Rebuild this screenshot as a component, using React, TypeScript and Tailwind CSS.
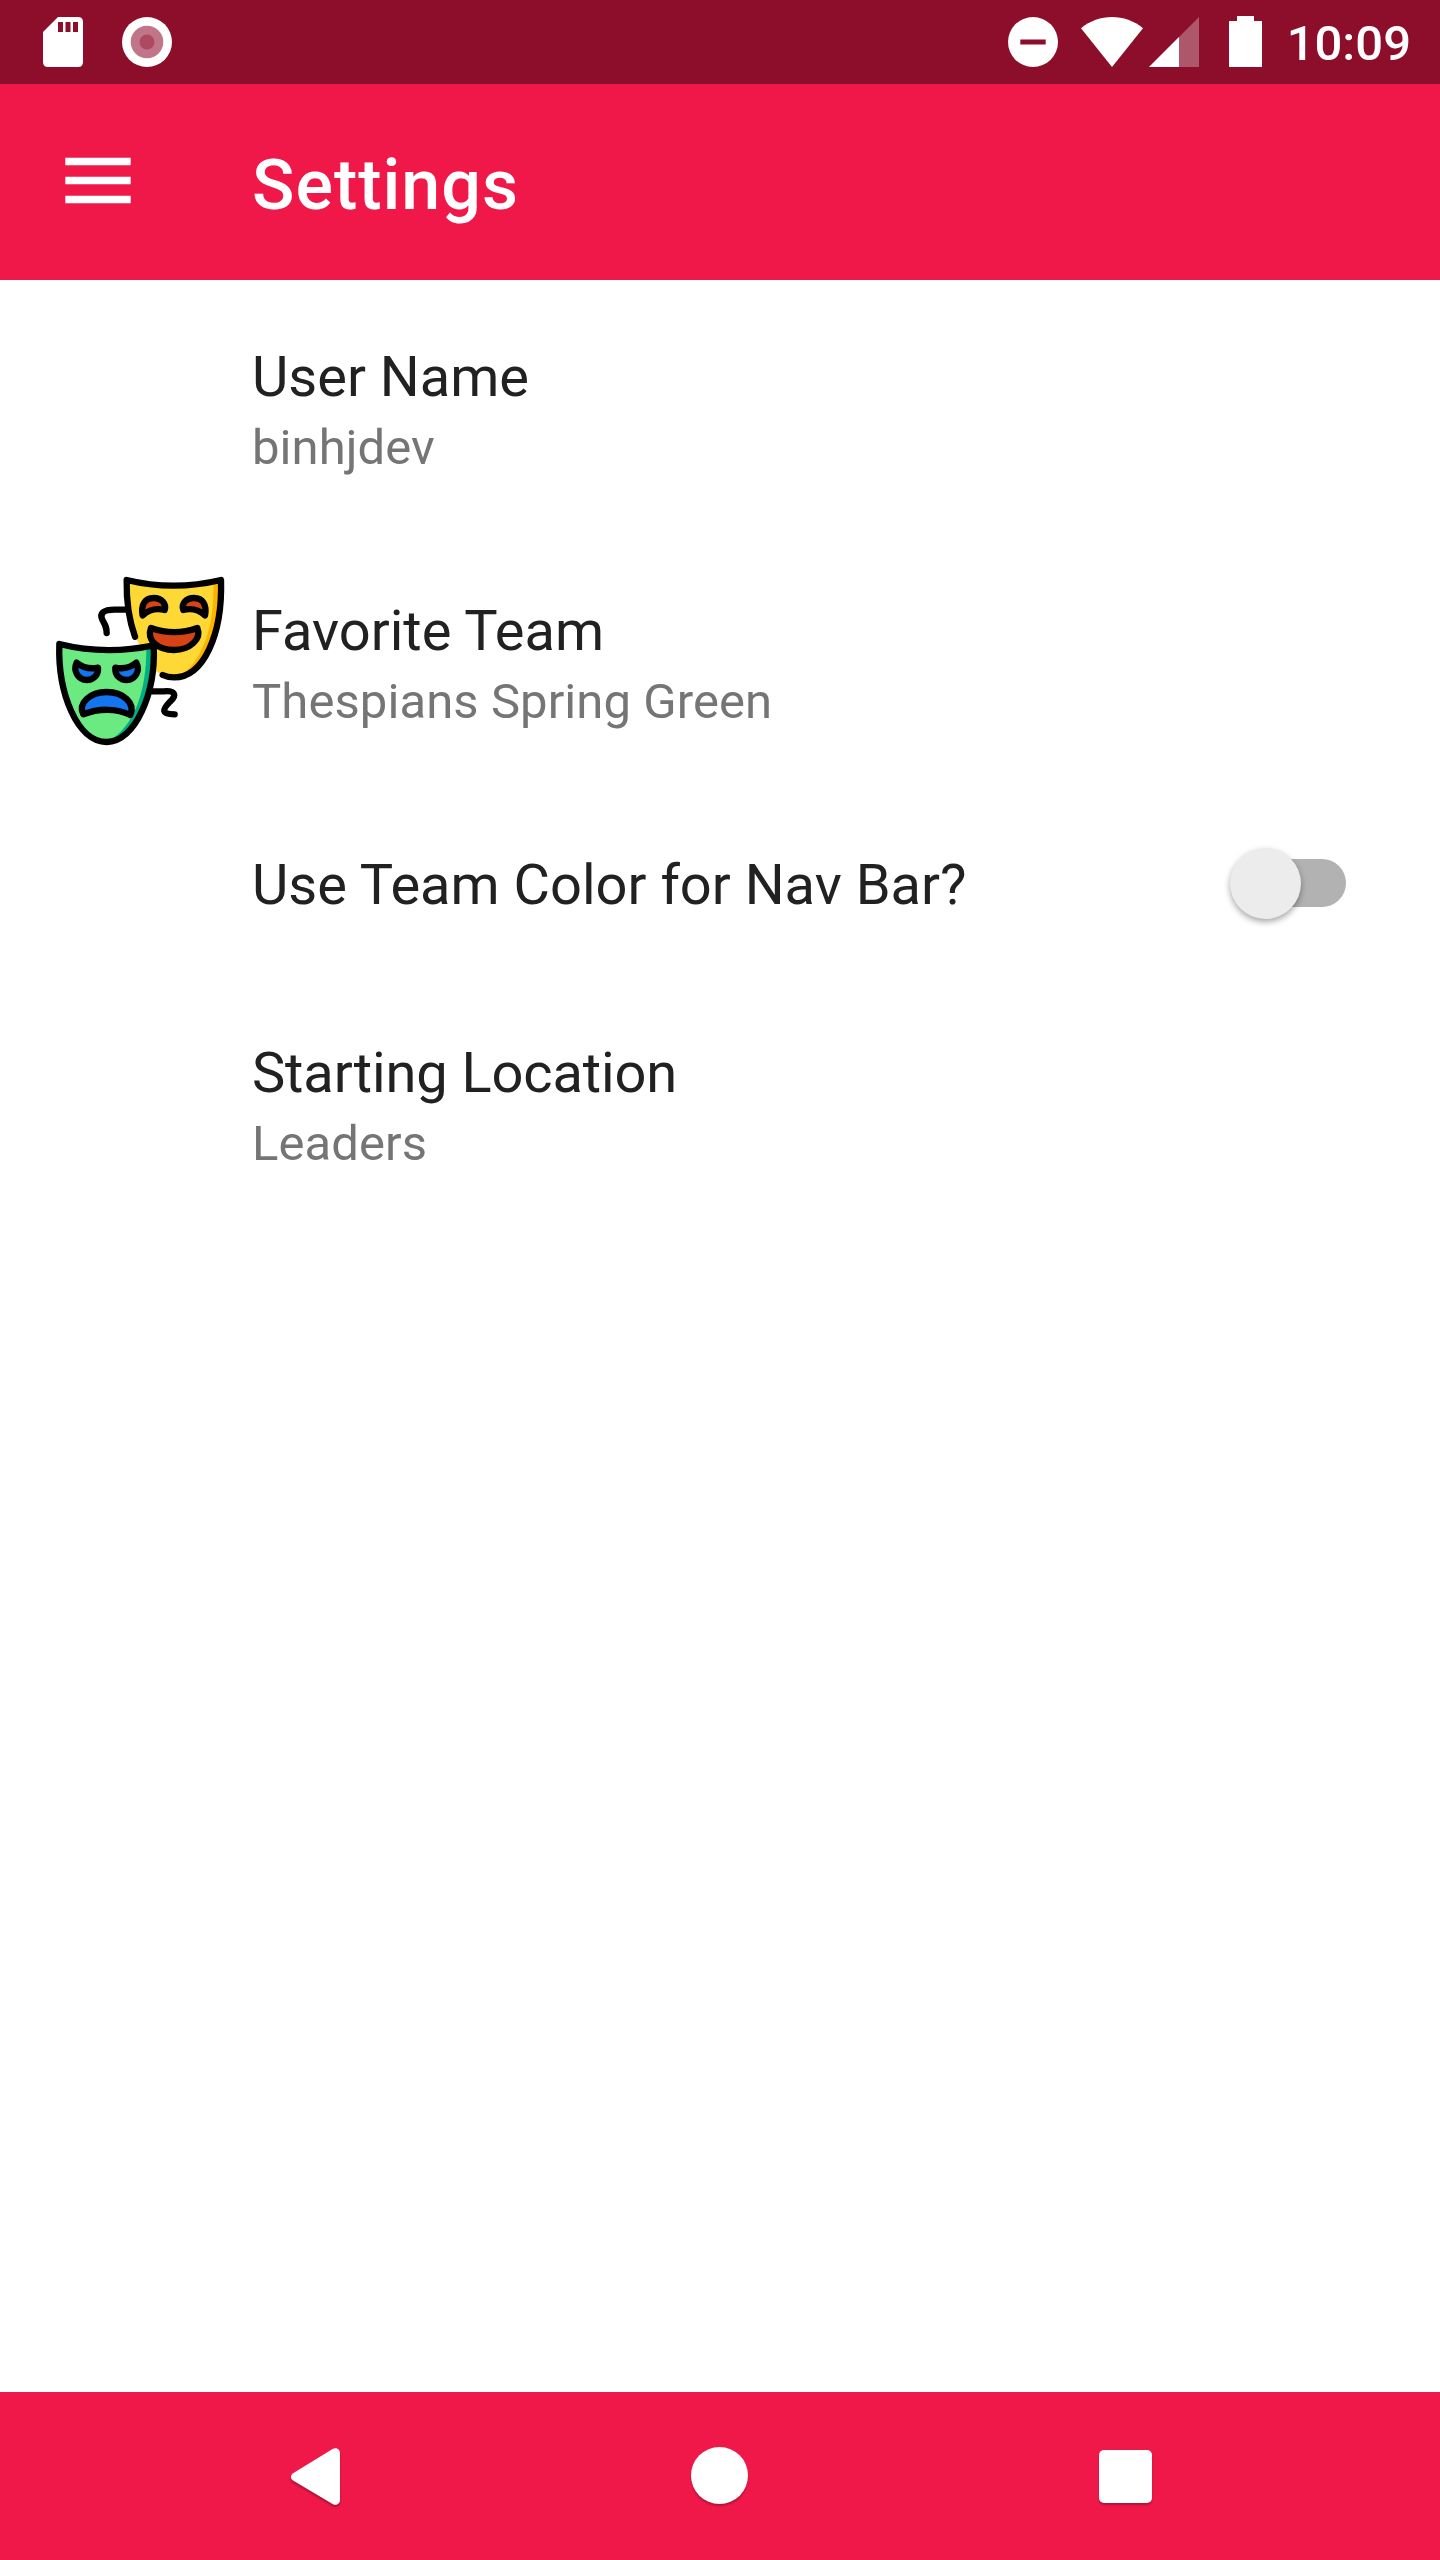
import type { ReactNode } from "react";

function Masks() {
  return (
    <svg viewBox="0 0 600 600" className="mb-[2px] h-[200px] w-[200px] shrink-0" fill="none" stroke="#000" strokeWidth="19" strokeLinecap="round" strokeLinejoin="round">
      <path d="M264 149H224C190 149 178 160 187 179C197 198 200 202 200 219" />
      <path d="M330 394H371C405 391 412 404 390 425C367 449 362 463 404 463" />
      <path d="M260 60Q400 92 543 60C547 210 500 353 402 352C385 352 372 347 350 335L285 232C265 180 260 120 260 60Z" fill="#fed835" stroke="none" />
      <path d="M520 66L543 60C547 210 500 353 410 350C480 320 525 210 520 66Z" fill="#ffb300" stroke="none" />
      <path d="M285 230C265 175 259 115 260 60C350 82 450 82 543 60C548 225 490 352 402 352C389 352 378 350 368 345" />
      <path d="M308 166C302 134 315 114 341 114C366 114 380 132 374 150C350 144 326 150 308 166Z" fill="#d84315" />
      <path d="M495 166C501 134 488 114 462 114C437 114 423 132 430 150C454 144 476 149 495 166Z" fill="#d84315" />
      <path d="M333 204C378 220 428 220 472 204C486 238 448 270 402 270C356 270 318 243 333 204Z" fill="#d84315" />
      <path d="M58 252Q200 286 341 258C347 400 285 546 200 546C112 546 53 400 58 252Z" fill="#6cea82" stroke="none" />
      <path d="M319 262L341 256C347 400 285 540 208 542C280 500 320 400 319 262Z" fill="#00b083" stroke="none" />
      <path d="M58 252C150 275 250 275 341 256C348 400 285 546 200 546C112 546 53 400 58 252Z" />
      <path d="M110 308C130 324 150 328 174 323C176 346 159 360 140 360C115 360 98 333 110 308Z" fill="#1475f0" />
      <path d="M289 308C270 324 250 328 226 323C224 346 241 360 260 360C285 360 302 333 289 308Z" fill="#1475f0" />
      <path d="M130 463C113 430 150 396 200 396C250 396 287 430 271 465C230 444 174 445 130 463Z" fill="#1475f0" />
    </svg>
  );
}

function StatusBar() {
  return (
    <header className="flex h-[84px] shrink-0 items-center bg-[#8c0e2a] pr-[29px] pl-[43px] text-white">
      <svg viewBox="0 0 40 50" className="h-[50px] w-[40px]">
        <path fill="currentColor" d="M15 0H35Q40 0 40 5V45Q40 50 35 50H5Q0 50 0 45V15Z" />
        <path fill="#8c0e2a" d="M15 5h5v10h-5zM22.5 5h5v10h-5zM30 5h5v10h-5z" />
      </svg>
      <svg viewBox="0 0 50 50" className="ml-[39px] h-[50px] w-[50px]">
        <circle cx="25" cy="25" r="25" fill="#fff" />
        <circle cx="25" cy="25" r="16.3" fill="#c17589" />
        <circle cx="25" cy="25" r="7.5" fill="#ad4a62" />
      </svg>
      <svg viewBox="0 0 50 50" className="ml-auto h-[50px] w-[50px]">
        <circle cx="25" cy="25" r="25" fill="#fff" />
        <path d="M12.3 22.5h25.4v5H12.3z" fill="#8c0e2a" />
      </svg>
      <svg viewBox="0 0 62 50" className="ml-[23px] h-[50px] w-[62px]">
        <path d="M0 11.300C18-3.700 44-3.700 62 11.300L31 50Z" fill="#fff" />
      </svg>
      <svg viewBox="0 0 50 50" className="ml-[6px] h-[50px] w-[50px]">
        <path d="M50 0V50H0Z" fill="#fff" fillOpacity=".3" />
        <path d="M30 20V50H0Z" fill="#fff" />
      </svg>
      <svg viewBox="0 0 33 51" className="mb-px ml-[30px] h-[51px] w-[33px]">
        <path d="M8 0H25V5H33V51H0V5H8Z" fill="#fff" />
      </svg>
      <span className="ml-[25px] pt-[4px] text-[49px] leading-[58px] font-medium">10:09</span>
    </header>
  );
}

function Preference({ title, summary, icon, control }: { title: ReactNode; summary?: string; icon?: ReactNode; control?: ReactNode }) {
  return (
    <li className={summary ? "flex h-[254px] items-center" : "flex h-[188px] items-center"}>
      <div className="flex w-[252px] shrink-0 items-center pl-[40px]">{icon}</div>
      <div className="grow pt-[6px]">
        <p className="text-[56px] leading-[74px] whitespace-nowrap text-[#212121]">{title}</p>
        {summary && <p className="mt-px -mb-px text-[49px] leading-[66px] tracking-[0.08px] whitespace-nowrap text-[#757575]">{summary}</p>}
      </div>
      {control}
    </li>
  );
}

function Toggle() {
  return (
    <button type="button" role="switch" aria-checked="false" aria-label="Use Team Color for Nav Bar?" className="mt-[2px] mr-[94px] flex h-[72px] w-[117px] items-center">
      <span className="ml-[6px] flex h-[48px] w-[111px] items-center rounded-full bg-[#b2b2b2]">
        <span className="-ml-[5px] size-[71px] shrink-0 rounded-full bg-[#ececec] shadow-[0_3px_6px_rgba(0,0,0,0.35)]" />
      </span>
    </button>
  );
}

export default function App() {
  return (
    <div className="flex h-[2560px] w-[1440px] flex-col overflow-hidden bg-white font-['Roboto',sans-serif]">
      <StatusBar />
      <div className="flex h-[196px] shrink-0 items-center bg-[#f01848] text-white">
        <svg viewBox="0 0 66 50" className="ml-[65px] h-[50px] w-[66px]">
          <path d="M.3.700h65.400v7.600H.3zM.3 19.700h65.400v7.600H.3zM.3 38.700h65.400v7.600H.3z" fill="currentColor" />
        </svg>
        <h1 className="ml-[121px] pt-[6px] text-[70px] leading-[82px] font-medium tracking-[1px]">Settings</h1>
      </div>
      <main className="grow">
        <ul>
          <Preference title="User Name" summary="binhjdev" />
          <Preference title="Favorite Team" summary="Thespians Spring Green" icon={<Masks />} />
          <Preference title="Use Team Color for Nav Bar?" control={<Toggle />} />
          <Preference title={<span className="tracking-[-0.13px]">Starting Location</span>} summary="Leaders" />
        </ul>
      </main>
      <nav className="flex h-[168px] shrink-0 items-center bg-[#f01848] text-white">
        <svg viewBox="0 0 49 57" className="mt-px ml-[291px] h-[57px] w-[49px] overflow-visible drop-shadow-[0_2px_1px_rgba(0,0,0,0.3)]">
          <path fill="currentColor" d="M42 .8C45-1 49 1 49 5V52C49 56 45 58 42 56.200L2 32.500C-.7 31-.7 27 2 25.300Z" />
        </svg>
        <span className="mb-px ml-[351px] size-[57px] rounded-full bg-white shadow-[0_2px_2px_rgba(0,0,0,0.25)]" />
        <span className="mt-px ml-[351px] size-[53px] rounded-[5px] bg-white shadow-[0_2px_2px_rgba(0,0,0,0.25)]" />
      </nav>
    </div>
  );
}
